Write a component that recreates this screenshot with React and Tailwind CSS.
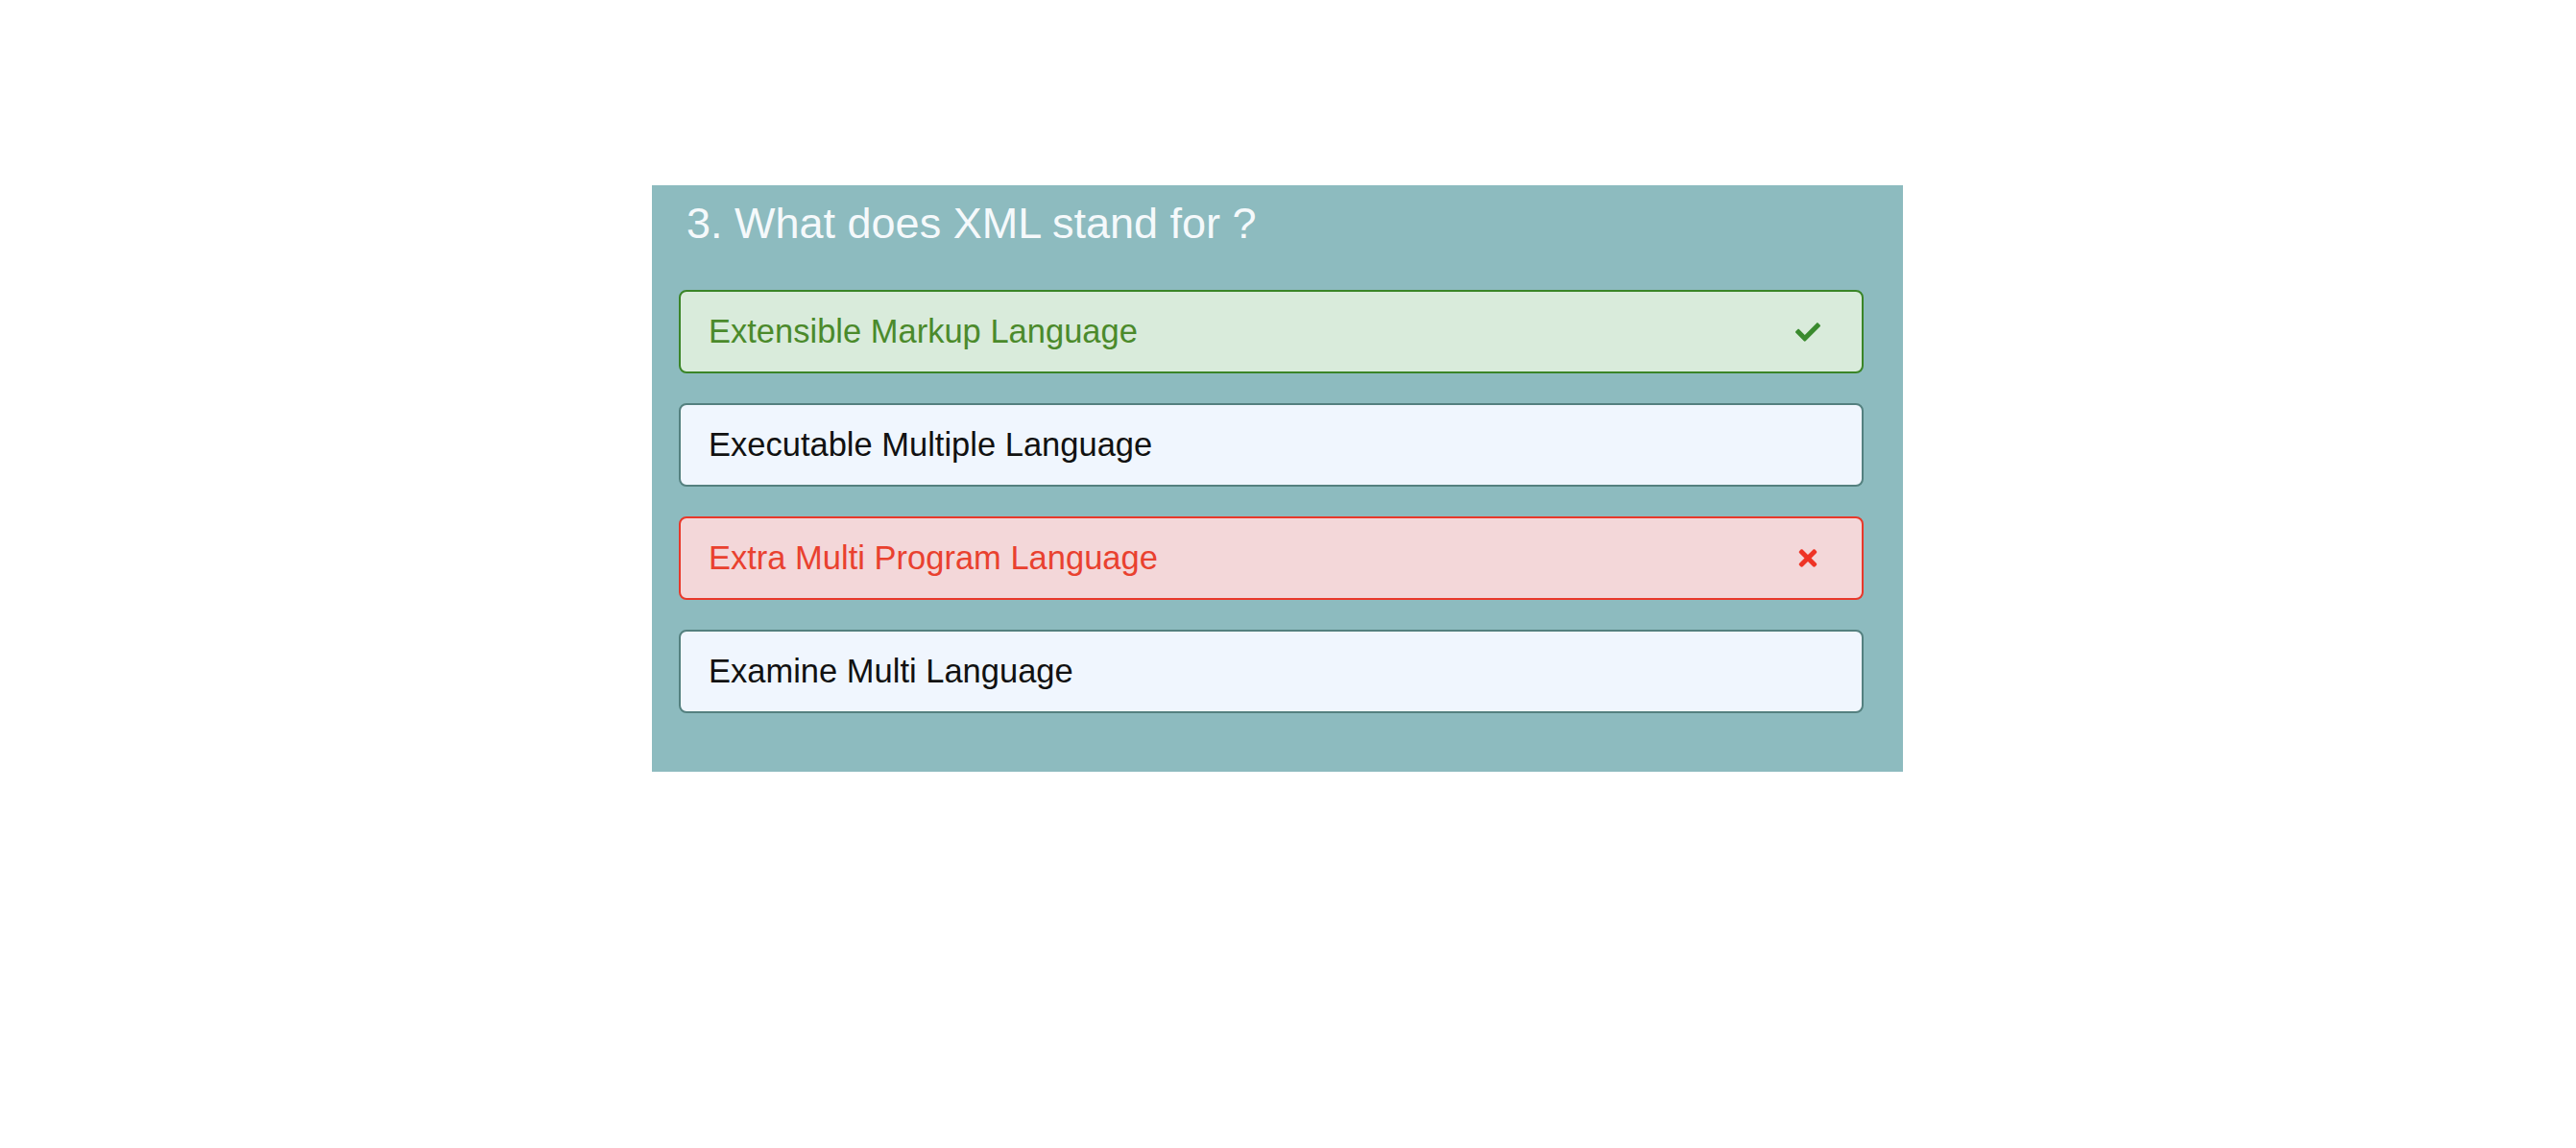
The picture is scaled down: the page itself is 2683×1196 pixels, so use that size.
import React from "react";
import { FaCheck, FaTimes } from "react-icons/fa";

const options = [
  { text: "Extensible Markup Language", status: "correct" },
  { text: "Executable Multiple Language", status: "none" },
  { text: "Extra Multi Program Language", status: "wrong" },
  { text: "Examine Multi Language", status: "none" },
];

const styles = {
  correct: "bg-[#d9ebdb] border-[#3a8527] text-[#4b8a2b]",
  wrong: "bg-[#f3d7d9] border-[#e8382a] text-[#e9412f]",
  none: "bg-[#f0f6fe] border-[#54807f] text-[#111111]",
};

const App = () => {
  return (
    <div className="min-h-screen bg-white">
      <div
        className="ml-[679px] pt-[193px]"
        style={{ fontFamily: '"Liberation Sans", Arial, sans-serif' }}
      >
        {/* Question card */}
        <div className="w-[1303px] bg-[#8dbbbf] pt-[12px] pb-[61px] pl-[28px]">
          <h2 className="pl-[8px] text-[45px] leading-[55px] text-[#f5f9fb] font-normal">
            3. What does XML stand for ?
          </h2>
          <div className="mt-[42px] flex flex-col gap-[31px]">
            {options.map((opt) => (
              <div
                key={opt.text}
                className={`w-[1234px] h-[87px] flex items-center justify-between border-2 rounded-[8px] pl-[29px] pr-[43px] ${styles[opt.status]}`}
              >
                <span className="text-[34.5px] leading-none">{opt.text}</span>
                <span className="w-[26px] flex justify-center">
                  {opt.status === "correct" && (
                    <FaCheck size={26} className="text-[#3a8a2e]" />
                  )}
                  {opt.status === "wrong" && (
                    <FaTimes size={27} className="text-[#ee3426]" />
                  )}
                </span>
              </div>
            ))}
          </div>
        </div>
      </div>
    </div>
  );
};

export default App;
